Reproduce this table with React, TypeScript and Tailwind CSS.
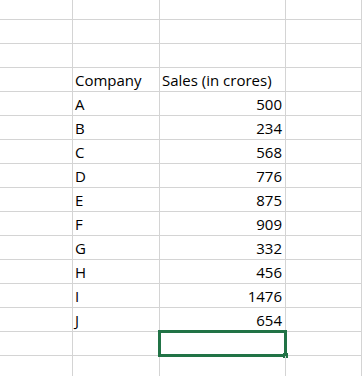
import React from 'react';

type Row = { company?: string; sales?: string };

// sheet rows, top to bottom; empty cells have no value
const ROWS: Row[] = [
  {},
  {},
  {},
  { company: 'Company', sales: 'Sales (in crores)' },
  { company: 'A', sales: '500' },
  { company: 'B', sales: '234' },
  { company: 'C', sales: '568' },
  { company: 'D', sales: '776' },
  { company: 'E', sales: '875' },
  { company: 'F', sales: '909' },
  { company: 'G', sales: '332' },
  { company: 'H', sales: '456' },
  { company: 'I', sales: '1476' },
  { company: 'J', sales: '654' },
  {},
  {},
];

const SELECTED_ROW = 14;

const cell = 'border-r border-b border-[#d4d4d4] flex items-end pb-[1px] leading-[20px]';

export default function App() {
  return (
    <div
      className="w-[362px] h-[376px] overflow-hidden bg-white text-black text-[15px]"
      style={{ fontFamily: '"Open Sans", sans-serif' }}
    >
      {ROWS.map((row, i) => {
        const header = i === 3;
        return (
          <div key={i} className={`flex ${i === 0 ? 'h-[20px]' : 'h-[24px]'}`}>
            <div className={`${cell} w-[73px] shrink-0`} />
            <div className={`${cell} w-[87px] shrink-0 pl-[2px]`}>{row.company}</div>
            <div
              className={`${cell} w-[126px] shrink-0 relative ${
                header ? 'justify-start pl-[2px]' : 'justify-end pr-[3px]'
              }`}
            >
              {row.sales}
              {i === SELECTED_ROW && (
                <>
                  <div className="absolute -inset-[2px] border-[3px] border-[#217346]" />
                  <div className="absolute -right-[3px] -bottom-[3px] w-[5px] h-[5px] bg-[#217346]" />
                </>
              )}
            </div>
            <div className={`${cell} flex-1`} />
          </div>
        );
      })}
    </div>
  );
}
